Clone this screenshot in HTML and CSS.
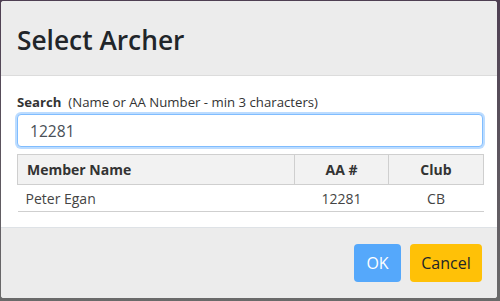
FILE: index.html
```html
<!DOCTYPE html>
<html>
<head>
<meta charset="utf-8">
<link rel="stylesheet" href="styles.css">
</head>
<body>
<div class="backdrop">
  <div class="modal">
    <div class="modal-header">
      <h1 class="modal-title">Select Archer</h1>
    </div>
    <div class="modal-body">
      <label class="search-label"><b>Search</b>&nbsp; (Name or AA Number - min 3 characters)</label>
      <input class="search-input" type="text" value="12281">
      <table class="results">
        <colgroup>
          <col class="w-name">
          <col class="w-aa">
          <col class="w-club">
        </colgroup>
        <thead>
          <tr>
            <th class="col-name">Member Name</th>
            <th class="col-aa">AA #</th>
            <th class="col-club">Club</th>
          </tr>
        </thead>
        <tbody>
          <tr>
            <td class="col-name">Peter Egan</td>
            <td class="col-aa">12281</td>
            <td class="col-club">CB</td>
          </tr>
        </tbody>
      </table>
    </div>
    <div class="modal-footer">
      <button class="btn btn-ok">OK</button>
      <button class="btn btn-cancel">Cancel</button>
    </div>
  </div>
</div>
</body>
</html>
```
FILE: styles.css
```css
html, body {
  margin: 0;
  padding: 0;
  width: 500px;
  height: 301px;
  overflow: hidden;
}
body {
  background: linear-gradient(#4e3f52, #6a6a6a);
  font-family: "Open Sans", "Liberation Sans", sans-serif;
  color: #333;
}
.backdrop {
  padding: 1px 3px 3px 1px;
}
.modal {
  width: 496px;
  height: 297px;
  background: #fff;
  border-radius: 3px;
  display: flex;
  flex-direction: column;
  overflow: hidden;
}
.modal-header {
  background: #ececec;
  height: 74px;
  border-bottom: 1px solid #dcdcdc;
  display: flex;
  align-items: center;
  padding: 0 16px;
}
.modal-title {
  margin: 0;
  font-size: 26.3px;
  font-weight: 600;
  color: #212529;
  padding-top: 3px;
}
.modal-body {
  height: 151px;
  padding: 0 14px 0 16px;
  border-bottom: 1px solid #dee2e6;
  display: flex;
  flex-direction: column;
}
.search-label {
  margin-top: 17px;
  font-size: 13.2px;
  line-height: 18px;
  color: #333;
}
.search-label b {
  font-weight: 700;
}
.search-input {
  margin-top: 3px;
  height: 33px;
  box-sizing: border-box;
  width: 466px;
  border: 1px solid #80bdff;
  box-shadow: 0 0 0 2px #bcdcff;
  border-radius: 4px;
  padding: 0 12px;
  font-family: "Open Sans", "Liberation Sans", sans-serif;
  font-size: 15.6px;
  color: #495057;
  outline: none;
}
.results {
  margin-top: 7px;
  width: 466px;
  table-layout: fixed;
  border-collapse: collapse;
  font-size: 14px;
}
.w-name { width: 277px; }
.w-aa { width: 94px; }
.w-club { width: 95px; }
.results th {
  background: #f2f2f2;
  height: 30px;
  border: 1px solid #cfcfcf;
  font-weight: 700;
  color: #333;
  padding: 0 9px;
  box-sizing: border-box;
}
.results td {
  height: 26px;
  padding: 0 8px;
  border-bottom: 1px solid #cfcfcf;
  color: #444;
}
.col-name { text-align: left; }
.col-aa { text-align: center; }
.col-club { text-align: center; }
.modal-footer {
  flex: 1;
  background: #ececec;
  display: flex;
  justify-content: flex-end;
  align-items: flex-start;
  gap: 9px;
  padding: 16px 15px 0 0;
}
.btn {
  height: 38px;
  border: none;
  border-radius: 4px;
  font-family: "Open Sans", "Liberation Sans", sans-serif;
  font-size: 16px;
  padding: 0;
}
.btn-ok {
  background: #55a8fb;
  color: #fff;
  width: 47px;
}
.btn-cancel {
  background: #ffc107;
  color: #212529;
  width: 72px;
}
```
